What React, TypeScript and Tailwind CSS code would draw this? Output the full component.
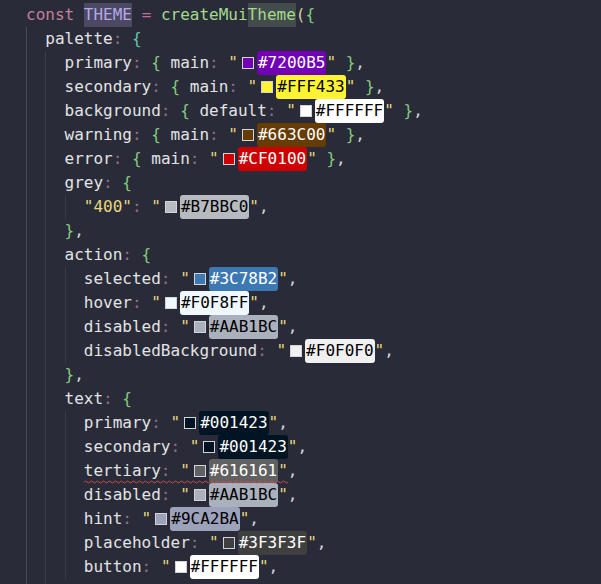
import React from "react";

type Entry = {
  key: string;
  hex: string;
  swatch: string;
  chip: string;
  quotedKey?: boolean;
  squiggle?: boolean;
};

const Key = ({ children }: { children: React.ReactNode }) => (
  <span className="text-[#e3e3e6]">{children}</span>
);
const Colon = () => <span className="text-[#8f6f83]">:</span>;
const Brace = ({ c, teal }: { c: string; teal?: boolean }) => (
  <span className={teal ? "text-[#62c4a8]" : "text-[#84c97c]"}>{c}</span>
);
const Comma = () => <span className="text-[#d6d6d8]">,</span>;
const Quote = () => <span className="text-[#e8d77c]">"</span>;
const Sp = () => <span> </span>;

const ColorValue = ({ hex, swatch, chip }: { hex: string; swatch: string; chip: string }) => (
  <>
    <Quote />
    <span className={`ml-[4px] mr-[3px] size-[12px] self-center border border-[#d4d4d8] ${swatch}`} />
    <span className={`flex items-center rounded-[3px] px-[1px] ${chip}`}>{hex}</span>
    <Quote />
  </>
);

const Squiggle = () => (
  <svg className="absolute bottom-[-1px] left-0 h-[4px] w-full" preserveAspectRatio="none">
    <defs>
      <pattern id="wave" width="6" height="4" patternUnits="userSpaceOnUse">
        <path d="M0 2 Q1.5 0 3 2 T6 2" fill="none" stroke="#c44a4f" strokeWidth="1" />
      </pattern>
    </defs>
    <rect width="100%" height="4" fill="url(#wave)" />
  </svg>
);

const Line = ({ indent, children }: { indent: number; children: React.ReactNode }) => (
  <div className="flex h-6 whitespace-pre">
    {Array.from({ length: indent }).map((_, i) => (
      <span
        key={i}
        className={`w-[2ch] shrink-0 border-l ${i === 0 ? "border-[#474a59]" : "border-[#393c49]"}`}
      />
    ))}
    <div className="flex items-stretch leading-6">{children}</div>
  </div>
);

const mainEntries: Entry[] = [
  { key: "primary", hex: "#7200B5", swatch: "bg-[#7200b5]", chip: "bg-[#7200b5] text-white" },
  { key: "secondary", hex: "#FFF433", swatch: "bg-[#fff433]", chip: "bg-[#fff433] text-black" },
  { key: "background", hex: "#FFFFFF", swatch: "bg-white", chip: "bg-white text-black" },
  { key: "warning", hex: "#663C00", swatch: "bg-[#663c00]", chip: "bg-[#663c00] text-white" },
  { key: "error", hex: "#CF0100", swatch: "bg-[#cf0100]", chip: "bg-[#cf0100] text-white" },
];

const actionEntries: Entry[] = [
  { key: "selected", hex: "#3C78B2", swatch: "bg-[#3c78b2]", chip: "bg-[#3c78b2] text-white" },
  { key: "hover", hex: "#F0F8FF", swatch: "bg-[#f0f8ff]", chip: "bg-[#f0f8ff] text-black" },
  { key: "disabled", hex: "#AAB1BC", swatch: "bg-[#aab1bc]", chip: "bg-[#aab1bc] text-black" },
  { key: "disabledBackground", hex: "#F0F0F0", swatch: "bg-[#f0f0f0]", chip: "bg-[#f0f0f0] text-black" },
];

const textEntries: Entry[] = [
  { key: "primary", hex: "#001423", swatch: "bg-[#001423]", chip: "bg-[#001423] text-white" },
  { key: "secondary", hex: "#001423", swatch: "bg-[#001423]", chip: "bg-[#001423] text-white" },
  { key: "tertiary", hex: "#616161", swatch: "bg-[#616161]", chip: "bg-[#616161] text-white", squiggle: true },
  { key: "disabled", hex: "#AAB1BC", swatch: "bg-[#aab1bc]", chip: "bg-[#aab1bc] text-black" },
  { key: "hint", hex: "#9CA2BA", swatch: "bg-[#9ca2ba]", chip: "bg-[#9ca2ba] text-black" },
  { key: "placeholder", hex: "#3F3F3F", swatch: "bg-[#3f3f3f]", chip: "bg-[#3f3f3f] text-white" },
  { key: "button", hex: "#FFFFFF", swatch: "bg-white", chip: "bg-white text-black" },
];

const FlatEntry = ({ e }: { e: Entry }) => {
  const body = (
    <>
      {e.quotedKey ? (
        <>
          <Quote />
          <span className="text-[#e8d77c]">{e.key}</span>
          <Quote />
        </>
      ) : (
        <Key>{e.key}</Key>
      )}
      <Colon />
      <Sp />
      <ColorValue hex={e.hex} swatch={e.swatch} chip={e.chip} />
    </>
  );
  return (
    <Line indent={3}>
      {e.squiggle ? <span className="relative flex items-stretch">{body}<Squiggle /></span> : body}
      <Comma />
    </Line>
  );
};

const BlockOpen = ({ name }: { name: string }) => (
  <Line indent={2}>
    <Key>{name}</Key>
    <Colon />
    <Sp />
    <Brace c="{" />
  </Line>
);

const BlockClose = () => (
  <Line indent={2}>
    <Brace c="}" />
    <Comma />
  </Line>
);

export default function App() {
  return (
    <div className="h-[584px] w-[601px] overflow-hidden bg-[#292c38] pl-[26px] pt-[3px] font-['DejaVu_Sans_Mono',monospace] text-[16px] text-[#e3e3e6]">
      <Line indent={0}>
        <span className="text-[#c57f9e]">const</span>
        <Sp />
        <span className="bg-[#4c4962] text-[#b6a7e8]">THEME</span>
        <Sp />
        <span className="text-[#c16f9a]">=</span>
        <Sp />
        <span className="text-[#a3da8b]">createMui</span>
        <span className="bg-[#444b4c] text-[#a3da8b]">Theme</span>
        <span className="text-[#d8d0a0]">(</span>
        <Brace c="{" />
      </Line>
      <Line indent={1}>
        <Key>palette</Key>
        <Colon />
        <Sp />
        <Brace c="{" teal />
      </Line>
      {mainEntries.map((e) => (
        <Line key={e.key} indent={2}>
          <Key>{e.key}</Key>
          <Colon />
          <Sp />
          <Brace c="{" />
          <Sp />
          <Key>{e.key === "background" ? "default" : "main"}</Key>
          <Colon />
          <Sp />
          <ColorValue hex={e.hex} swatch={e.swatch} chip={e.chip} />
          <Sp />
          <Brace c="}" />
          <Comma />
        </Line>
      ))}
      <BlockOpen name="grey" />
      <FlatEntry
        e={{ key: "400", hex: "#B7BBC0", swatch: "bg-[#b7bbc0]", chip: "bg-[#b7bbc0] text-black", quotedKey: true }}
      />
      <BlockClose />
      <BlockOpen name="action" />
      {actionEntries.map((e) => (
        <FlatEntry key={e.key} e={e} />
      ))}
      <BlockClose />
      <BlockOpen name="text" />
      {textEntries.map((e) => (
        <FlatEntry key={e.key} e={e} />
      ))}
      <BlockClose />
    </div>
  );
}
